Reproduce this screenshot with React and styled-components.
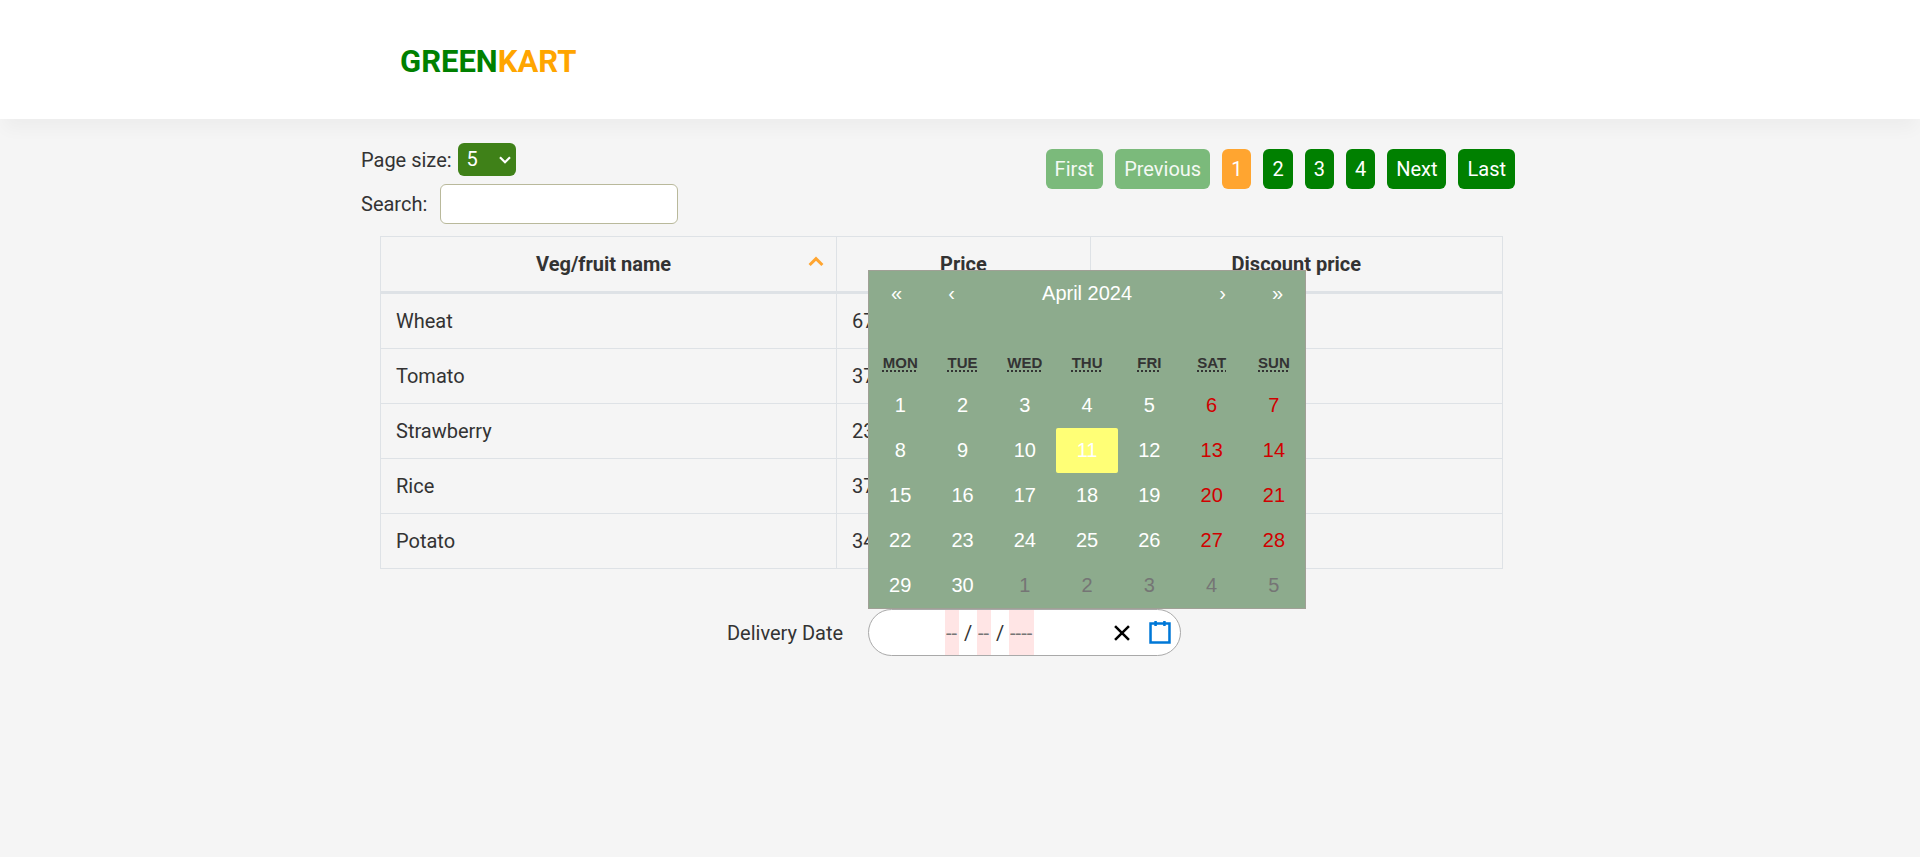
import React, { useState } from "react";
import styled, { createGlobalStyle } from "styled-components";

const GlobalStyle = createGlobalStyle`
  *, *::before, *::after { box-sizing: border-box; }
  body {
    margin: 0;
    background: #f5f5f5;
    color: #333;
    font-family: Roboto, "Liberation Sans", sans-serif;
    font-size: 20px;
    line-height: 30px;
  }
  button, input, select { font: inherit; color: inherit; margin: 0; }
`;

const Header = styled.header`
  position: relative;
  background: #fff;
  box-shadow: 0 14px 16px -4px rgba(0, 0, 0, 0.035);
`;

const HeaderInner = styled.div`
  display: flex;
  align-items: center;
  max-width: 1200px;
  height: 119px;
  margin: 0 auto;
  padding: 4px 40px 0;
`;

const Logo = styled.a`
  color: #008000;
  font-size: 31px;
  font-weight: 700;
  text-decoration: none;
`;

const LogoAccent = styled.span`
  color: #ffa500;
`;

const Page = styled.main`
  max-width: 1200px;
  margin: 0 auto;
`;

const Controls = styled.div`
  display: flex;
  justify-content: space-between;
  align-items: flex-start;
  padding: 24px 45px 12px 0;
`;

const Filters = styled.div`
  display: flex;
  flex-direction: column;
  gap: 8px;
`;

const Field = styled.div`
  display: flex;
  align-items: center;
  padding-left: 1px;
`;

const SelectWrap = styled.div`
  display: grid;
  align-items: center;
  margin-left: 6px;
  > * { grid-area: 1 / 1; }
`;

const PageSelect = styled.select`
  width: 58px;
  height: 33px;
  padding: 0 9px 1px;
  appearance: none;
  border: 0;
  border-radius: 6px;
  background: #3f8118;
  color: #fff;
`;

const SelectArrow = styled.svg`
  justify-self: end;
  margin-right: 5px;
  pointer-events: none;
`;

const SearchInput = styled.input`
  width: 238px;
  height: 40px;
  margin-left: 13px;
  padding: 0 10px;
  border: 1px solid #b9b99b;
  border-radius: 6px;
  background: #fff;
`;

const Pagination = styled.nav`
  display: flex;
  gap: 12px;
  padding-top: 6px;
`;

const PageButton = styled.button`
  height: 40px;
  padding: 0 9px;
  border: 0;
  border-radius: 6px;
  background: ${(p) => (p.$current ? "#ffa530" : "#008000")};
  color: #fff;
  &:disabled {
    background: #7bba7b;
    color: #f4f9f4;
  }
`;

const ProductTable = styled.table`
  width: calc(100% - 77px);
  margin-left: 20px;
  border-collapse: collapse;
  table-layout: fixed;
  th, td {
    padding: 12px 15px;
    border: 1px solid #dee2e6;
  }
  th {
    border-bottom-width: 3px;
    font-weight: 700;
    text-align: center;
  }
`;

const NameColumn = styled.col`
  width: 40.65%;
`;

const PriceColumn = styled.col`
  width: 22.6%;
`;

const SortHeading = styled.div`
  display: grid;
  grid-template-columns: 1fr;
  align-items: center;
  > * { grid-area: 1 / 1; }
`;

const SortLabel = styled.span`
  padding-right: 10px;
`;

const SortArrow = styled.svg`
  justify-self: end;
  margin: 0 -3px 6px 0;
`;

const Delivery = styled.div`
  display: flex;
  justify-content: center;
  align-items: center;
  gap: 25px;
  padding: 40px 12px 40px 0;
`;

const DatePicker = styled.div`
  position: relative;
  display: flex;
  align-items: center;
  width: 313px;
  height: 47px;
  padding: 0 1px 0 76px;
  border: 1px solid #a9a9a9;
  border-radius: 24px;
  background: #fff;
`;

const DateParts = styled.div`
  display: flex;
  flex: 1;
  align-items: center;
  align-self: stretch;
`;

const DatePart = styled.input`
  width: ${(p) => (p.$long ? 25 : 14)}px;
  height: 100%;
  padding: 0 1px;
  border: 0;
  background: #ffe5e5;
  &::placeholder { color: #757575; opacity: 1; }
`;

const Divider = styled.span`
  width: 18px;
  text-align: center;
`;

const IconButton = styled.button`
  display: flex;
  padding: 4px 7px;
  border: 0;
  background: transparent;
`;

const Calendar = styled.section`
  position: absolute;
  bottom: calc(100% + 1px);
  left: -1px;
  width: 438px;
  border: 1px solid #a0a096;
  background: #8dab8d;
  color: #fff;
  font-family: "Liberation Sans", Arial, sans-serif;
  line-height: 25px;
`;

const CalendarNav = styled.div`
  display: flex;
  height: 45px;
  margin-bottom: 25px;
`;

const NavButton = styled.button`
  flex: ${(p) => (p.$label ? "1" : "0 0 55px")};
  padding: 0;
  border: 0;
  background: transparent;
`;

const Week = styled.div`
  display: grid;
  grid-template-columns: repeat(7, 1fr);
`;

const Weekday = styled.abbr`
  padding: 11px 0 9px;
  color: #333;
  font-size: 15px;
  font-weight: 700;
  line-height: 22px;
  text-align: center;
  text-decoration: underline dotted 2px;
  text-decoration-skip-ink: none;
  text-underline-offset: 2px;
`;

const dayColors = { normal: "#fff", weekend: "#d10000", outside: "#757575" };

const Day = styled.button`
  height: 45px;
  padding: 0;
  border: 0;
  border-radius: 2px;
  background: ${(p) => (p.$today ? "#ffff76" : "transparent")};
  color: ${(p) => dayColors[p.$kind]};
`;

const products = [
  ["Wheat", 67, 28],
  ["Tomato", 37, 26],
  ["Strawberry", 23, 15],
  ["Rice", 37, 26],
  ["Potato", 34, 22],
];

const weekdays = ["Monday", "Tuesday", "Wednesday", "Thursday", "Friday", "Saturday", "Sunday"];

const days = Array.from({ length: 35 }, (_, i) => {
  const outside = i >= 30;
  return {
    label: outside ? i - 29 : i + 1,
    kind: outside ? "outside" : i % 7 > 4 ? "weekend" : "normal",
    today: i === 10,
  };
});

export default function App() {
  const [search, setSearch] = useState("");
  const visible = products.filter(([name]) => name.toLowerCase().includes(search.toLowerCase()));

  return (
    <>
      <GlobalStyle />
      <Header>
        <HeaderInner>
          <Logo href="#">
            GREEN<LogoAccent>KART</LogoAccent>
          </Logo>
        </HeaderInner>
      </Header>
      <Page>
        <Controls>
          <Filters>
            <Field>
              <label htmlFor="page-size">Page size:</label>
              <SelectWrap>
                <PageSelect id="page-size" defaultValue="5">
                  <option>5</option>
                  <option>10</option>
                  <option>20</option>
                </PageSelect>
                <SelectArrow width="12" height="8" viewBox="0 0 12 8" fill="none" stroke="#fff" strokeWidth="2.2">
                  <path d="M1 1.2 6 6.2 11 1.2" />
                </SelectArrow>
              </SelectWrap>
            </Field>
            <Field>
              <label htmlFor="search">Search:</label>
              <SearchInput id="search" type="text" value={search} onChange={(e) => setSearch(e.target.value)} />
            </Field>
          </Filters>
          <Pagination aria-label="Pages">
            <PageButton disabled>First</PageButton>
            <PageButton disabled>Previous</PageButton>
            <PageButton $current aria-current="page">1</PageButton>
            <PageButton>2</PageButton>
            <PageButton>3</PageButton>
            <PageButton>4</PageButton>
            <PageButton>Next</PageButton>
            <PageButton>Last</PageButton>
          </Pagination>
        </Controls>
        <ProductTable>
          <colgroup>
            <NameColumn />
            <PriceColumn />
            <col />
          </colgroup>
          <thead>
            <tr>
              <th scope="col" aria-sort="descending">
                <SortHeading>
                  <SortLabel>Veg/fruit name</SortLabel>
                  <SortArrow width="16" height="11" viewBox="0 0 16 11" fill="none" stroke="#ffa530" strokeWidth="3">
                    <path d="M1.6 9 8 2.6 14.4 9" />
                  </SortArrow>
                </SortHeading>
              </th>
              <th scope="col">Price</th>
              <th scope="col">Discount price</th>
            </tr>
          </thead>
          <tbody>
            {visible.map(([name, price]) => (
              <tr key={name}>
                <td>{name}</td>
                <td>{price}</td>
                <td />
              </tr>
            ))}
          </tbody>
        </ProductTable>
        <Delivery>
          <label htmlFor="delivery-month">Delivery Date</label>
          <DatePicker>
            <DateParts>
              <DatePart id="delivery-month" placeholder="--" />
              <Divider>/</Divider>
              <DatePart aria-label="Day" placeholder="--" />
              <Divider>/</Divider>
              <DatePart $long aria-label="Year" placeholder="----" />
            </DateParts>
            <IconButton aria-label="Clear date">
              <svg width="24" height="24" viewBox="0 0 19 19" stroke="#000" strokeWidth="2">
                <path d="M4 4 15 15M15 4 4 15" />
              </svg>
            </IconButton>
            <IconButton aria-label="Toggle calendar">
              <svg width="24" height="24" viewBox="0 0 19 19" fill="none" stroke="#0078d7" strokeWidth="2">
                <path d="M2 2H17V17H2ZM6 0V4M13 0V4" />
              </svg>
            </IconButton>
            <Calendar aria-label="Choose a date">
              <CalendarNav>
                <NavButton aria-label="Previous year">«</NavButton>
                <NavButton aria-label="Previous month">‹</NavButton>
                <NavButton $label>April 2024</NavButton>
                <NavButton aria-label="Next month">›</NavButton>
                <NavButton aria-label="Next year">»</NavButton>
              </CalendarNav>
              <Week>
                {weekdays.map((name) => (
                  <Weekday key={name} title={name}>
                    {name.slice(0, 3).toUpperCase()}
                  </Weekday>
                ))}
                {days.map((day, i) => (
                  <Day key={i} $kind={day.kind} $today={day.today}>
                    {day.label}
                  </Day>
                ))}
              </Week>
            </Calendar>
          </DatePicker>
        </Delivery>
      </Page>
    </>
  );
}
